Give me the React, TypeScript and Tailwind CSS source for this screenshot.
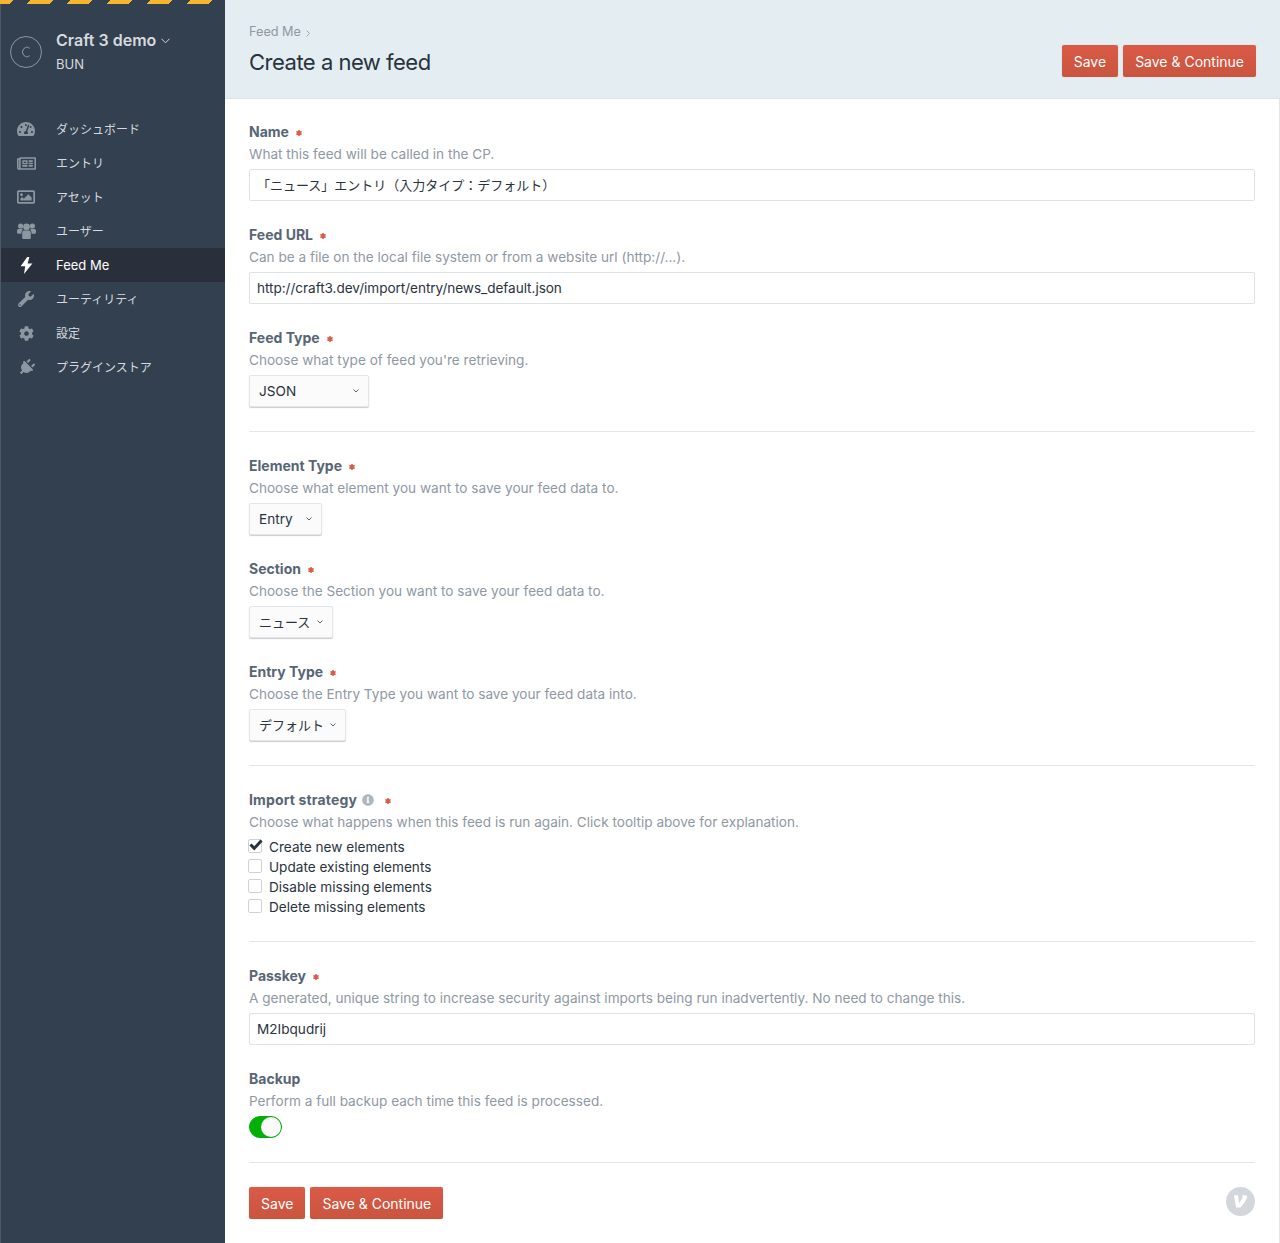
import React from 'react';
import { FaCog, FaInfoCircle, FaPlug, FaRegImage, FaRegNewspaper, FaTachometerAlt, FaWrench } from 'react-icons/fa';

const UsersIcon = () => (
    <svg width="19" height="16" viewBox="0 0 19 16" fill="currentColor">
        <circle cx="3.6" cy="3" r="2.6" />
        <circle cx="15.4" cy="3" r="2.6" />
        <circle cx="9.5" cy="3.8" r="3.4" />
        <path d="M0 7.5C0 6.5 1 6 2 6H5C5.4 6 5.6 6.2 5.8 6.4C4.8 7.6 4.4 9 4.4 10.8H1.2C0.5 10.8 0 10.3 0 9.6ZM19 7.5C19 6.5 18 6 17 6H14C13.6 6 13.4 6.2 13.2 6.4C14.2 7.6 14.6 9 14.6 10.8H17.8C18.5 10.8 19 10.3 19 9.6Z" />
        <path d="M7 7.6H12C13.5 7.6 13.8 9 13.8 10.5V14.4C13.8 15.3 13.2 16 12.3 16H6.7C5.8 16 5.2 15.3 5.2 14.4V10.5C5.2 9 5.5 7.6 7 7.6Z" />
    </svg>
);

const BoltIcon = () => (
    <svg width="13" height="17" viewBox="0 0 13 17" fill="currentColor">
        <path d="M7.2 0L0.6 9.2H5.2L4 17L12.4 6.6H7.6L9.4 0Z" />
    </svg>
);

const navItems = [
    { label: 'ダッシュボード', icon: <FaTachometerAlt size={18} /> },
    { label: 'エントリ', icon: <FaRegNewspaper size={19} /> },
    { label: 'アセット', icon: <FaRegImage size={18} /> },
    { label: 'ユーザー', icon: <UsersIcon /> },
    { label: 'Feed Me', icon: <BoltIcon />, active: true },
    { label: 'ユーティリティ', icon: <FaWrench size={16} /> },
    { label: '設定', icon: <FaCog size={15} /> },
    { label: 'プラグインストア', icon: <FaPlug size={17} className="rotate-45" /> },
];

const Required = () => (
    <svg width="6" height="6" viewBox="0 0 6 6" className="ml-[7px] mt-[2px] text-[#da5a47]" stroke="currentColor" strokeWidth="1.5">
        <path d="M3 0v6M0.4 1.5l5.2 3M0.4 4.5l5.2-3" />
    </svg>
);

const Label = ({ children, required = true }: { children: React.ReactNode; required?: boolean }) => (
    <div className="flex items-center h-5 text-[14px] font-bold text-[#576575]">
        {children}
        {required && <Required />}
    </div>
);

const Hint = ({ children }: { children: React.ReactNode }) => (
    <div className="h-5 mt-[2px] text-[#8f98a3]">{children}</div>
);

const Field = ({ label, hint, children }: { label: React.ReactNode; hint: string; children: React.ReactNode }) => (
    <div>
        <Label>{label}</Label>
        <Hint>{hint}</Hint>
        <div className="mt-[5px]">{children}</div>
    </div>
);

const TextInput = ({ value, className = '' }: { value: string; className?: string }) => (
    <div className={`h-8 flex items-center px-[7px] border border-[#dfe2e5] rounded-[2px] text-[#29323d] whitespace-nowrap ${className}`}>
        {value}
    </div>
);

const Select = ({ value, width, className = '' }: { value: string; width: string; className?: string }) => (
    <div className={`h-8 ${width} flex items-center justify-between pl-[9px] pr-[9px] rounded-[2px] bg-[#fbfbfb] border border-[#e3e5e8] shadow-[0_1px_1px_rgba(0,0,0,0.2)] text-[#29323d] whitespace-nowrap ${className}`}>
        <span>{value}</span>
        <svg width="6" height="4" viewBox="0 0 6 4" fill="none" stroke="#59636f" strokeWidth="1">
            <path d="M0.5 0.5L3 3L5.5 0.5" />
        </svg>
    </div>
);

const Divider = () => <hr className="border-0 h-px bg-[#e3e5e8] my-6" />;

const Button = ({ children }: { children: React.ReactNode }) => (
    <div className="h-8 flex items-center px-3 pt-[2px] text-[14px] rounded-[2px] bg-gradient-to-b from-[#da5a47] to-[#c9553f] text-white shadow-[0_0_1px_rgba(0,0,0,0.3)]">
        {children}
    </div>
);

const Check = ({ label, checked = false }: { label: string; checked?: boolean }) => (
    <div className="h-5 flex items-center text-[#29323d]">
        <div className="relative w-[14px] h-[14px] -ml-px mr-[7px] -mt-[2px] border border-[#ced2d7] rounded-[2px] bg-white">
            {checked && (
                <svg width="14" height="12" viewBox="0 0 14 12" className="absolute left-0 -top-px" fill="none" stroke="#29323d" strokeWidth="3">
                    <path d="M1.5 5.5L5.2 9.4L12.5 1.5" />
                </svg>
            )}
        </div>
        {label}
    </div>
);

const App: React.FC = () => {
    return (
        <div className="flex min-h-[1243px] text-[13.6px] leading-5 font-['Inter','Noto_Sans_CJK_JP',sans-serif]">
            <aside className="w-[225px] shrink-0 bg-[#33404f] border-l border-l-[#4c5968] text-[#d6dadf]">
                <div className="h-1 -ml-px bg-[repeating-linear-gradient(135deg,#f5b52e_0,#f5b52e_9.2px,transparent_9.2px,transparent_21.9px,#f5b52e_21.9px,#f5b52e_28.28px)]" />
                <div className="flex pl-[9px] pt-[26px] h-[108px]">
                    <div className="mt-[6px] w-8 h-8 rounded-full border border-[#8d97a2] flex items-center justify-center">
                        <svg width="10" height="12" viewBox="0 0 10 12" fill="none" stroke="#8d97a2" strokeWidth="1">
                            <path d="M8.6 2.2A4.4 4.8 0 1 0 8.6 9.8" />
                        </svg>
                    </div>
                    <div className="ml-[14px]">
                        <div className="flex items-center h-5 text-[16px] font-semibold">
                            Craft 3 demo
                            <svg width="9" height="6" viewBox="0 0 9 6" className="ml-[5px] mt-[2px]" fill="none" stroke="#d6dadf" strokeWidth="1">
                                <path d="M0.5 0.8L4.5 4.8L8.5 0.8" />
                            </svg>
                        </div>
                        <div className="mt-[4px] text-[13px]">BUN</div>
                    </div>
                </div>
                <nav>
                    {navItems.map((item) => (
                        <div key={item.label} className={`h-[34px] flex items-center ${item.active ? 'bg-[#29303b] text-white text-[13px]' : 'text-[12px]'}`}>
                            <span className={`w-[55px] flex justify-center pr-[5px] ${item.active ? 'text-white' : 'text-[#8d97a2]'}`}>
                                {item.icon}
                            </span>
                            <span className={item.active ? '' : 'mt-[2px]'}>{item.label}</span>
                        </div>
                    ))}
                </nav>
            </aside>
            <main className="flex-1 min-w-0 flex flex-col border-r border-r-[#e3e5e8]">
                <header className="h-[99px] -mr-px shrink-0 bg-[#e4edf1] border-b border-b-[#dfe4e7] flex justify-between pl-6 pr-6">
                    <div>
                        <div className="mt-[22px] flex items-center text-[12.7px] text-[#8f98a3]">
                            Feed Me
                            <svg width="4" height="7" viewBox="0 0 4 7" className="ml-[5px] mt-[2px]" fill="none" stroke="#8f98a3" strokeWidth="0.8">
                                <path d="M0.5 0.5L3.5 3.5L0.5 6.5" />
                            </svg>
                        </div>
                        <h1 className="mt-[4px] text-[22px] tracking-[-0.5px] leading-8 text-[#29323d] font-normal">Create a new feed</h1>
                    </div>
                    <div className="flex gap-[5px] mt-[45px] h-8">
                        <Button>Save</Button>
                        <Button>Save &amp; Continue</Button>
                    </div>
                </header>
                <div className="pt-[23px] pl-6 pr-6">
                    <div className="flex flex-col gap-6">
                        <Field label="Name" hint="What this feed will be called in the CP.">
                            <TextInput value="「ニュース」エントリ（入力タイプ：デフォルト）" className="text-[13px]" />
                        </Field>
                        <Field label="Feed URL" hint="Can be a file on the local file system or from a website url (http://...).">
                            <TextInput value="http://craft3.dev/import/entry/news_default.json" className="tracking-[-0.05px]" />
                        </Field>
                        <Field label="Feed Type" hint="Choose what type of feed you're retrieving.">
                            <Select value="JSON" width="w-[120px]" />
                        </Field>
                    </div>
                    <Divider />
                    <div className="flex flex-col gap-6">
                        <Field label="Element Type" hint="Choose what element you want to save your feed data to.">
                            <Select value="Entry" width="w-[73px]" />
                        </Field>
                        <Field label="Section" hint="Choose the Section you want to save your feed data to.">
                            <Select value="ニュース" width="w-[84px]" className="text-[13px]" />
                        </Field>
                        <Field label="Entry Type" hint="Choose the Entry Type you want to save your feed data into.">
                            <Select value="デフォルト" width="w-[97px]" className="text-[13px]" />
                        </Field>
                    </div>
                    <Divider />
                    <div>
                        <div className="flex items-center h-5 text-[14px] tracking-[0.15px] font-bold text-[#576575]">
                            Import strategy
                            <FaInfoCircle size={12} className="ml-[5px] text-[#b0b6bd]" />
                            <span className="ml-[4px]"><Required /></span>
                        </div>
                        <Hint>Choose what happens when this feed is run again. Click tooltip above for explanation.</Hint>
                        <div className="mt-[5px]">
                            <Check label="Create new elements" checked />
                            <Check label="Update existing elements" />
                            <Check label="Disable missing elements" />
                            <Check label="Delete missing elements" />
                        </div>
                    </div>
                    <Divider />
                    <div className="flex flex-col gap-6">
                        <Field label="Passkey" hint="A generated, unique string to increase security against imports being run inadvertently. No need to change this.">
                            <TextInput value="M2Ibqudrij" />
                        </Field>
                        <div>
                            <Label required={false}>Backup</Label>
                            <Hint>Perform a full backup each time this feed is processed.</Hint>
                            <div className="mt-[5px] w-[33px] h-[22px] rounded-full bg-[#00b007] border border-[#00b007] flex justify-end">
                                <div className="w-5 h-5 rounded-full bg-[#fafafa]" />
                            </div>
                        </div>
                    </div>
                    <Divider />
                    <div className="flex items-center justify-between">
                        <div className="flex gap-[5px]">
                            <Button>Save</Button>
                            <Button>Save &amp; Continue</Button>
                        </div>
                        <div className="w-[29px] h-[29px] -mt-[4px] rounded-full bg-[#d3d7dc] flex items-center justify-center">
                            <svg width="15" height="14" viewBox="0 0 15 14" fill="#ffffff">
                                <path d="M1 1.2H5L6 9.2C7.6 7.2 9.6 4.4 9.6 2.8C9.6 2 9.4 1.6 9.1 1.2H13.2C13.6 1.7 13.9 2.3 13.9 3.2C13.9 5.8 10 10.6 7.6 13.4H3.1Z" />
                            </svg>
                        </div>
                    </div>
                </div>
            </main>
        </div>
    );
};

export default App;
